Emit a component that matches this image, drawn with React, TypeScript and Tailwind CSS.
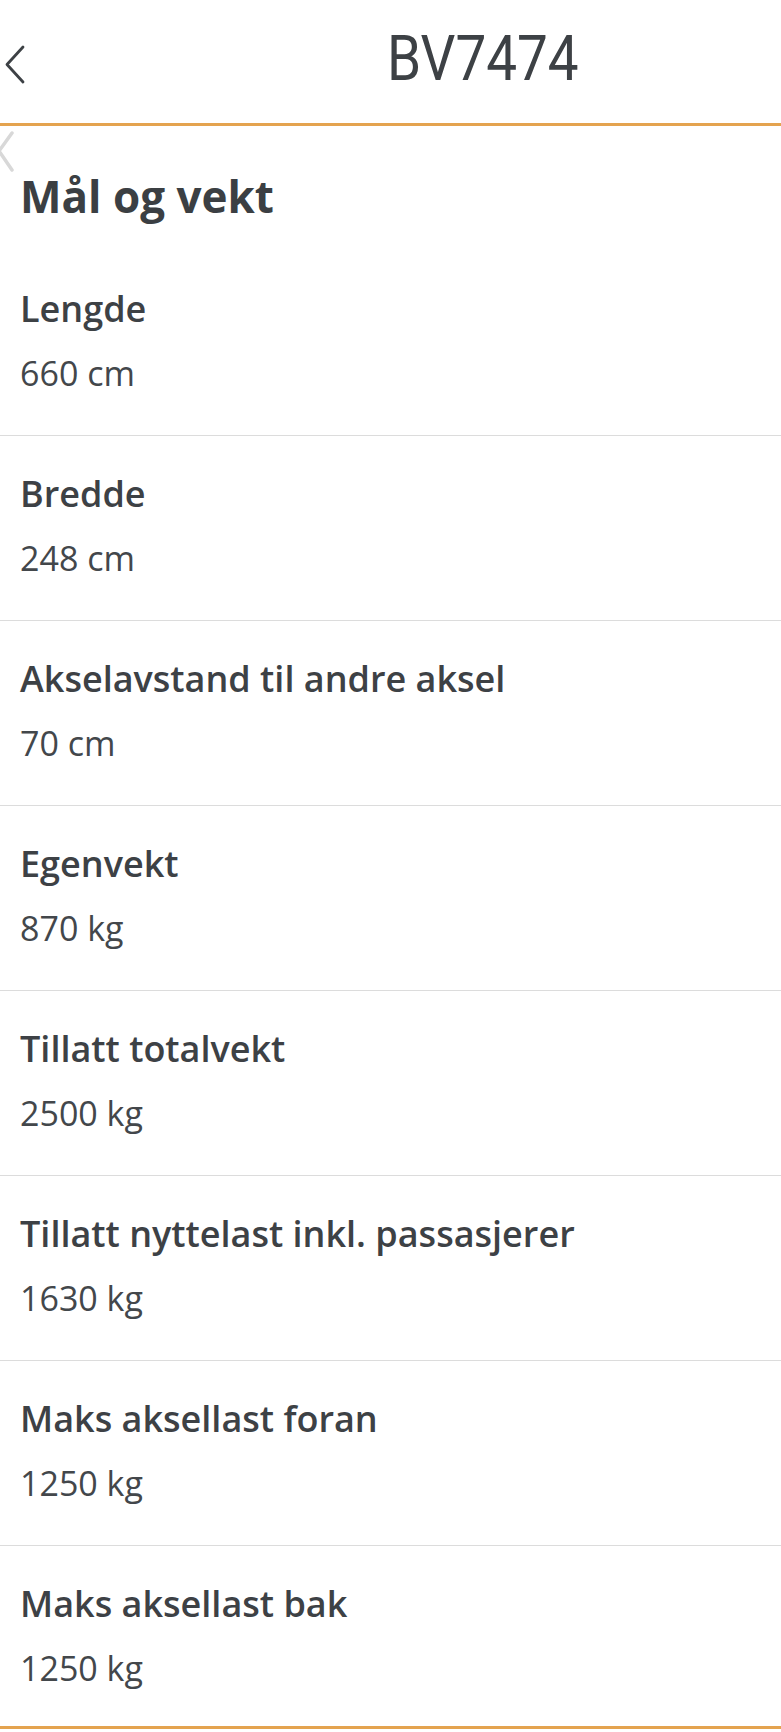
import React from "react";

const rows = [
  { label: "Lengde", value: "660 cm" },
  { label: "Bredde", value: "248 cm" },
  { label: "Akselavstand til andre aksel", value: "70 cm" },
  { label: "Egenvekt", value: "870 kg" },
  { label: "Tillatt totalvekt", value: "2500 kg" },
  { label: "Tillatt nyttelast inkl. passasjerer", value: "1630 kg" },
  { label: "Maks aksellast foran", value: "1250 kg" },
  { label: "Maks aksellast bak", value: "1250 kg" },
];

const App = () => {
  return (
    <div
      className="relative w-[781px] h-[1732px] overflow-hidden bg-white text-[#3d4145]"
      style={{ fontFamily: '"Open Sans", "Noto Sans", sans-serif' }}
    >
      {/* Header */}
      <div className="flex h-[123px]">
        <svg width="30" height="123" viewBox="0 0 30 123" className="shrink-0">
          <polyline
            points="23,47 7,64.5 23,82"
            fill="none"
            stroke="#3d4145"
            strokeWidth="2.8"
            strokeLinecap="round"
            strokeLinejoin="round"
          />
        </svg>
        <div className="ml-[357px] pt-[22px]">
          <span
            className="block text-[63px] leading-[74px] origin-left scale-x-[0.87] whitespace-nowrap"
            style={{ fontFamily: 'Roboto, "Liberation Sans", sans-serif' }}
          >
            BV7474
          </span>
        </div>
      </div>
      <div className="h-[3px] bg-[#e4a34f]" />

      {/* ghost back arrow */}
      <svg
        width="20"
        height="56"
        viewBox="0 0 20 56"
        className="absolute left-0 top-[124px]"
      >
        <polyline
          points="12,9 -1,27 12,46"
          fill="none"
          stroke="#d8d8d8"
          strokeWidth="3.5"
          strokeLinecap="round"
          strokeLinejoin="round"
        />
      </svg>

      {/* Section */}
      <h2 className="mt-[44px] px-[20px] text-[44px] leading-[52px] font-bold text-[#3b3f43]">
        Mål og vekt
      </h2>

      <div className="mt-[29px]">
        {rows.map((row, index) => {
          const last = index === rows.length - 1;
          return (
            <div
              key={row.label}
              className={
                last
                  ? "px-[20px] pt-[36px] pb-[36px] border-b-[3px] border-[#e4a34f]"
                  : "px-[20px] pt-[36px] pb-[40px] border-b border-[#dcdcdc]"
              }
            >
              <p className="text-[36px] leading-[44px] font-semibold whitespace-nowrap">
                {row.label}
              </p>
              <p className="mt-[20px] text-[34px] leading-[44px] text-[#43474b]">
                {row.value}
              </p>
            </div>
          );
        })}
      </div>
    </div>
  );
};

export default App;
